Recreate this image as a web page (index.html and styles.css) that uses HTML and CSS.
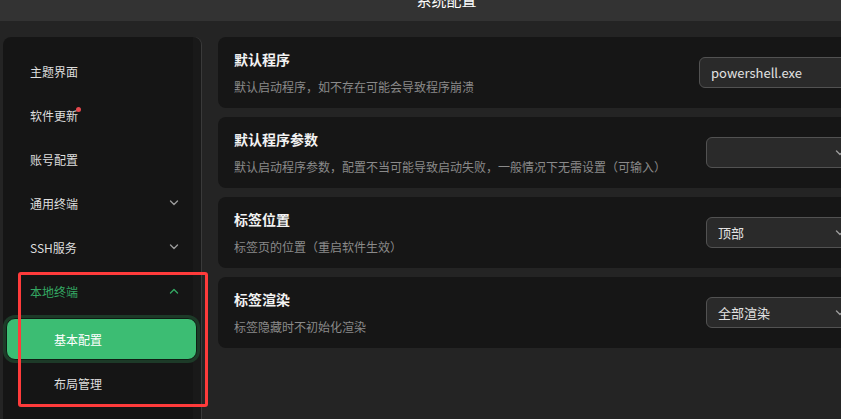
FILE: index.html
```html
<!DOCTYPE html>
<html>
<head>
  <title>系统配置</title>
  <link rel="stylesheet" href="styles.css">
</head>
<body>

  <div class="titlebar">
    <div class="title">系统配置</div>
  </div>

  <div class="main">
    <aside class="sidebar">
      <ul class="menu">
        <li class="menu-item">主题界面</li>
        <li class="menu-item"><span class="label">软件更新<span class="dot"></span></span></li>
        <li class="menu-item">账号配置</li>
        <li class="menu-item">
          <span>通用终端</span>
          <svg class="chevron" width="10" height="6" viewBox="0 0 10 6"><path d="M1.5 1l3.5 3.5 3.5-3.5"/></svg>
        </li>
        <li class="menu-item">
          <span>SSH服务</span>
          <svg class="chevron" width="10" height="6" viewBox="0 0 10 6"><path d="M1.5 1l3.5 3.5 3.5-3.5"/></svg>
        </li>
        <li class="menu-item open">
          <span>本地终端</span>
          <svg class="chevron" width="10" height="6" viewBox="0 0 10 6"><path d="M1.5 5l3.5-3.5 3.5 3.5"/></svg>
        </li>
        <li class="sub-item active">基本配置</li>
        <li class="sub-item">布局管理</li>
      </ul>
    </aside>

    <section class="content">
      <div class="card">
        <div class="card-text">
          <div class="card-title">默认程序</div>
          <div class="card-desc">默认启动程序，如不存在可能会导致程序崩溃</div>
        </div>
        <input type="text" class="field" value="powershell.exe">
      </div>

      <div class="card">
        <div class="card-text">
          <div class="card-title">默认程序参数</div>
          <div class="card-desc">默认启动程序参数，配置不当可能导致启动失败，一般情况下无需设置（可输入）</div>
        </div>
        <div class="select">
          <span></span>
          <svg class="chevron" width="10" height="6" viewBox="0 0 10 6"><path d="M1.5 1l3.5 3.5 3.5-3.5"/></svg>
        </div>
      </div>

      <div class="card">
        <div class="card-text">
          <div class="card-title">标签位置</div>
          <div class="card-desc">标签页的位置（重启软件生效）</div>
        </div>
        <div class="select">
          <span>顶部</span>
          <svg class="chevron" width="10" height="6" viewBox="0 0 10 6"><path d="M1.5 1l3.5 3.5 3.5-3.5"/></svg>
        </div>
      </div>

      <div class="card">
        <div class="card-text">
          <div class="card-title">标签渲染</div>
          <div class="card-desc">标签隐藏时不初始化渲染</div>
        </div>
        <div class="select">
          <span>全部渲染</span>
          <svg class="chevron" width="10" height="6" viewBox="0 0 10 6"><path d="M1.5 1l3.5 3.5 3.5-3.5"/></svg>
        </div>
      </div>
    </section>
  </div>

  <div class="mark"></div>

</body>
</html>
```

FILE: styles.css
```css
* {
  box-sizing: border-box;
}

body {
  margin: 0;
  width: 841px;
  height: 419px;
  overflow: hidden;
  background: #242424;
  font-family: "Noto Sans CJK SC", "Noto Sans", sans-serif;
  color: #dedede;
}

.titlebar {
  height: 21px;
  background: #333333;
  overflow: hidden;
}

.title {
  margin-top: -8px;
  padding-left: 52px;
  text-align: center;
  font-size: 15px;
  line-height: 15px;
  color: #ffffff;
}

.main {
  display: flex;
  gap: 17px;
  height: 398px;
  padding: 16px 0 0 3px;
}

.sidebar {
  flex: none;
  width: 198px;
  background: linear-gradient(90deg, #151515 190px, #191919 190px);
  border-radius: 8px 8px 0 0;
  box-shadow: 1px 0 0 #3a3a3a;
}

.menu {
  list-style: none;
  margin: 0;
  padding: 12px 0 0 0;
}

.menu-item {
  display: flex;
  align-items: center;
  justify-content: space-between;
  height: 44px;
  padding: 0 22px 0 27px;
  font-size: 12px;
}

.label {
  position: relative;
}

.dot {
  position: absolute;
  left: 46px;
  top: 0;
  width: 5px;
  height: 5px;
  border-radius: 50%;
  background: #e5484d;
}

.chevron {
  flex: none;
}

.chevron path {
  fill: none;
  stroke: #9a9a9a;
  stroke-width: 1.4;
  stroke-linecap: round;
  stroke-linejoin: round;
}

.menu-item.open {
  color: #34a863;
}

.menu-item.open .chevron path {
  stroke: #34a863;
}

.sub-item {
  display: flex;
  align-items: center;
  height: 42px;
  margin: 2px 4px 0 3px;
  padding-left: 47px;
  border: 1px solid transparent;
  border-radius: 9px;
  font-size: 12px;
}

.sub-item.active {
  margin-top: 5px;
  background: #3cbd73;
  border-color: #0f1d14;
  box-shadow: 0 0 0 3px #1d3a28;
  color: #ffffff;
}

.content {
  display: flex;
  flex-direction: column;
  gap: 9px;
  flex: none;
  width: 652px;
}

.card {
  display: flex;
  align-items: center;
  justify-content: space-between;
  height: 71px;
  padding: 0 12px 0 16px;
  background: #161616;
  border-radius: 8px;
}

.card-title {
  font-size: 14px;
  line-height: 20px;
  font-weight: bold;
  color: #f2f2f2;
}

.card-desc {
  margin-top: 9px;
  font-size: 12px;
  line-height: 18px;
  color: #8a8a8a;
}

.field {
  width: 159px;
  height: 31px;
  padding: 0 11px;
  border: 1px solid #525252;
  border-radius: 6px;
  background: #2a2a2a;
  color: #e2e2e2;
  font-family: "Noto Sans CJK SC", "Noto Sans", sans-serif;
  font-size: 13px;
  outline: none;
}

.select {
  display: flex;
  align-items: center;
  justify-content: space-between;
  width: 152px;
  height: 31px;
  padding: 0 12px 0 11px;
  border: 1px solid #525252;
  border-radius: 6px;
  background: #2a2a2a;
  color: #e2e2e2;
  font-size: 13px;
}

.mark {
  position: absolute;
  left: 18px;
  top: 272px;
  width: 190px;
  height: 135px;
  border: 3px solid #ff3b3b;
  border-radius: 3px;
}
```
